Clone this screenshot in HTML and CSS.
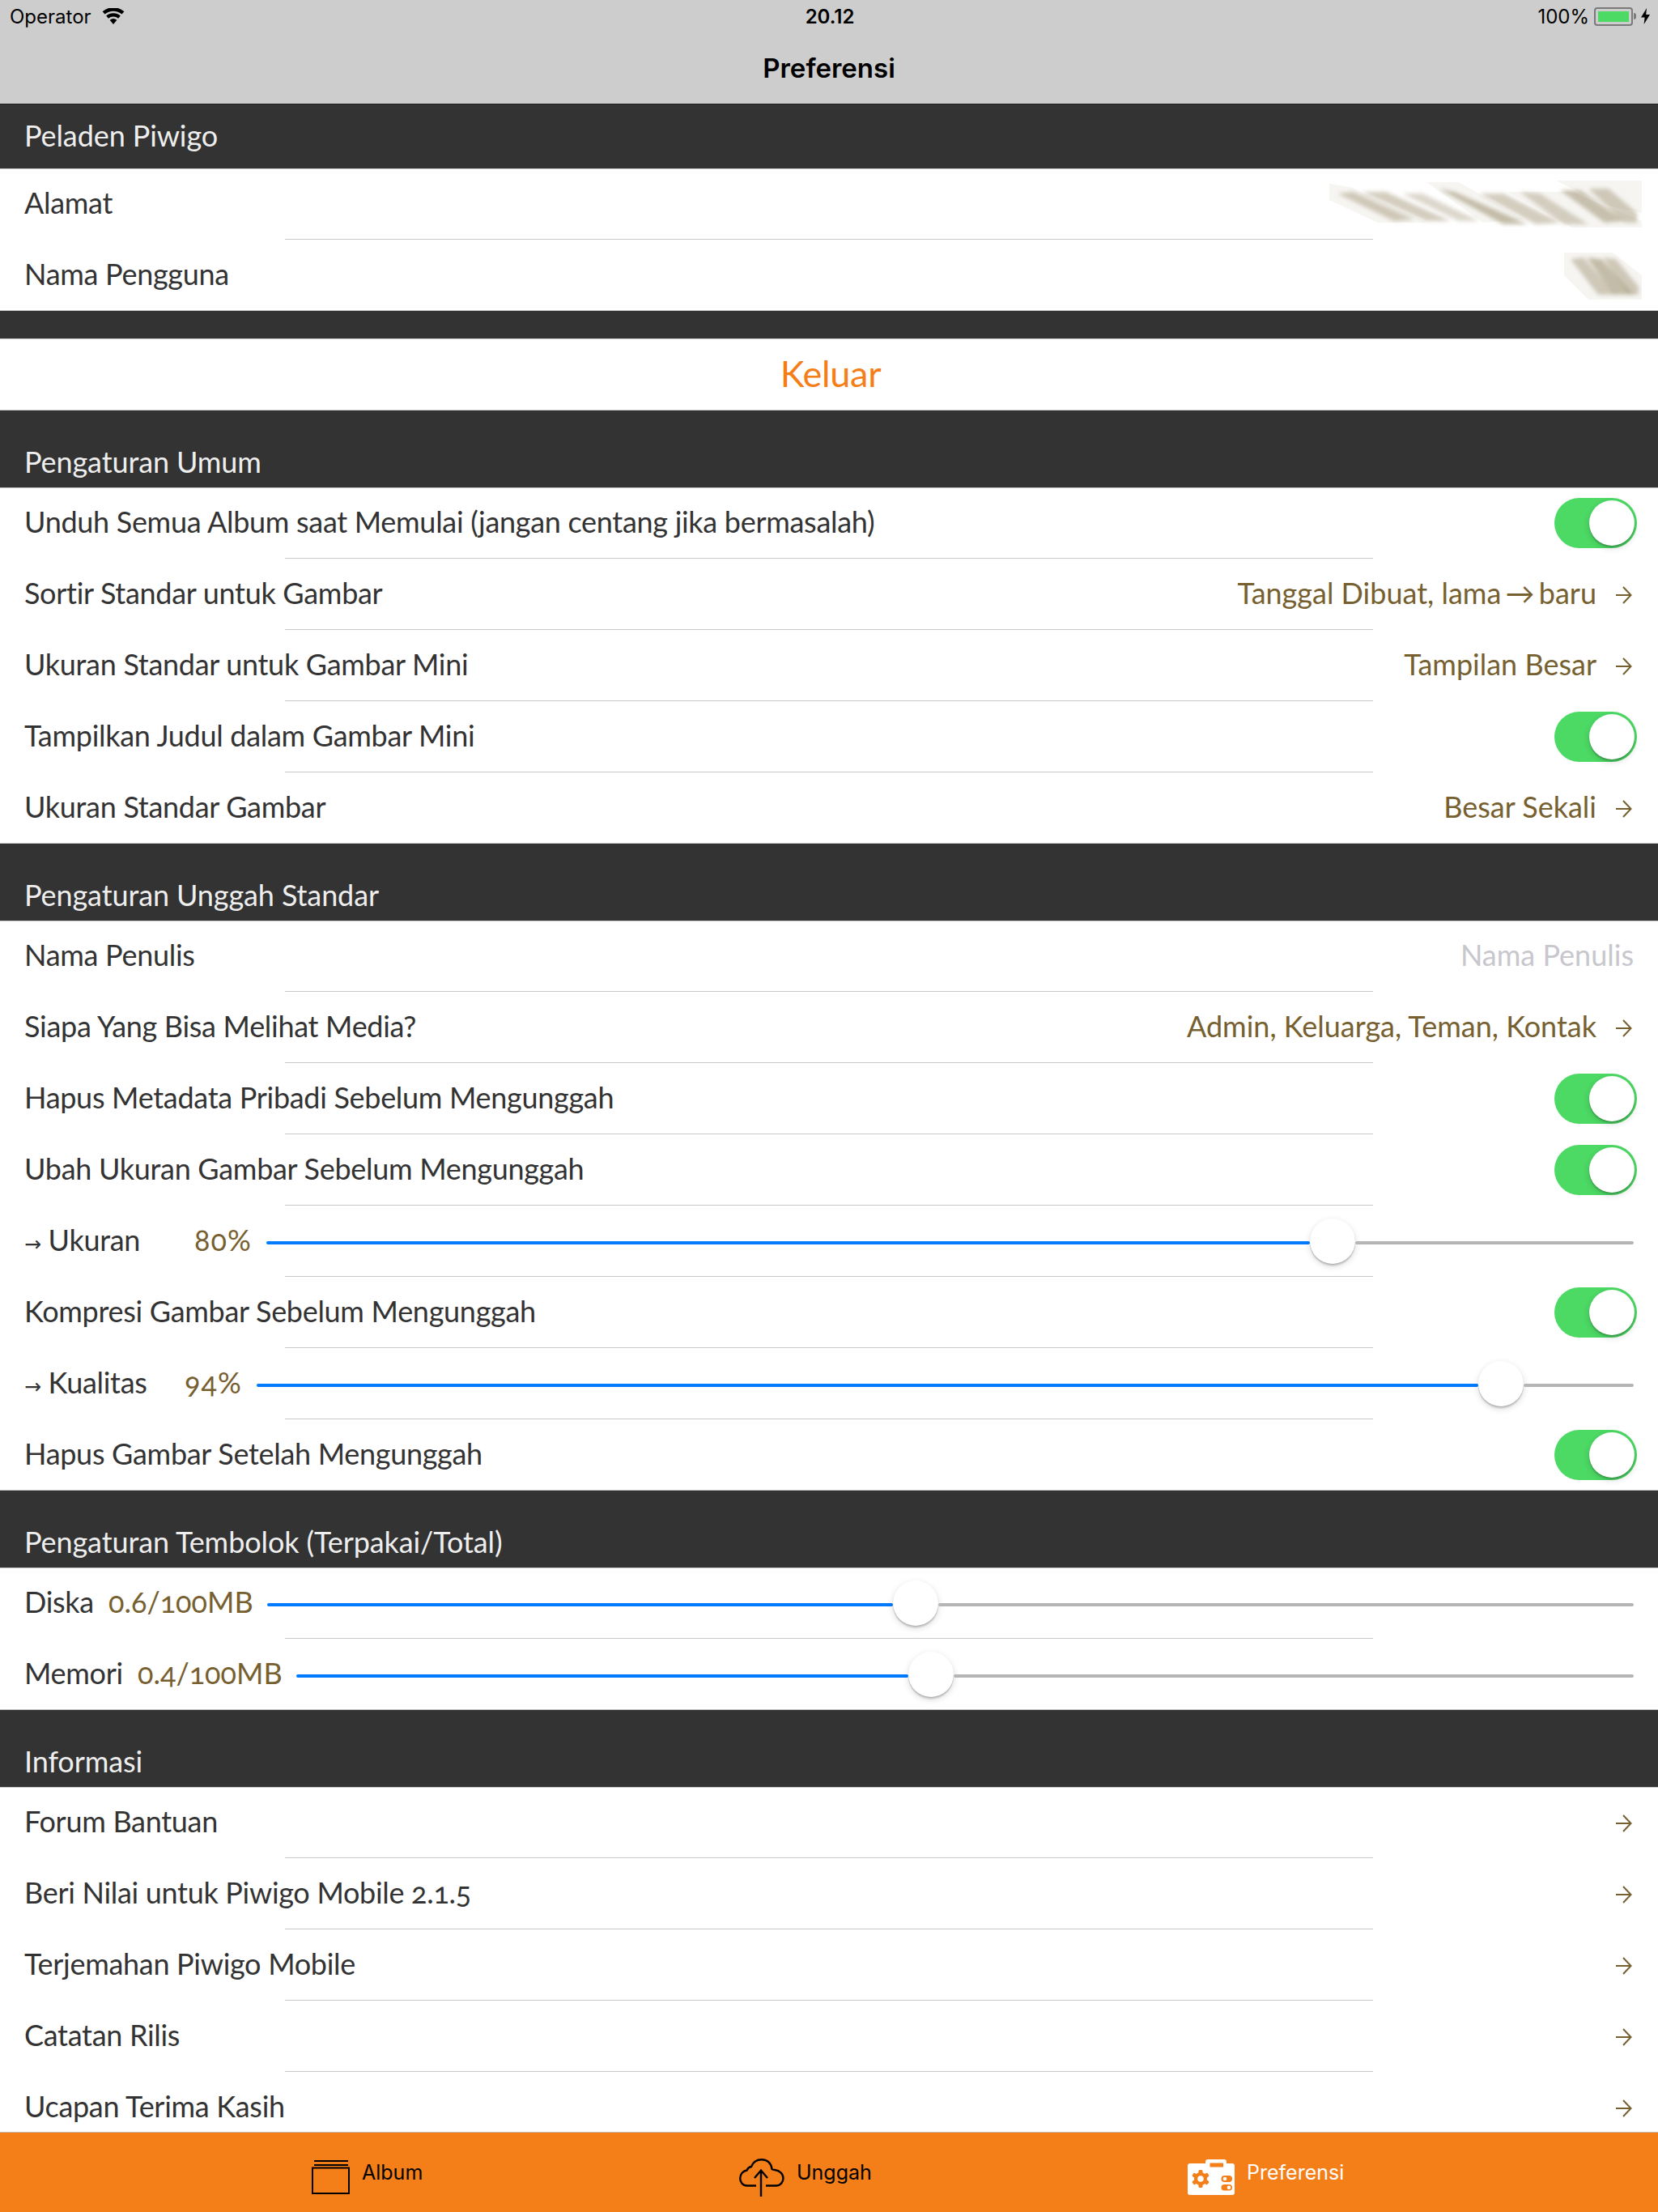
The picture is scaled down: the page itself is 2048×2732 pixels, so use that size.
FILE: index.html
```html
<!DOCTYPE html>
<html lang="id">
<head>
  <meta charset="UTF-8">
  <meta name="viewport" content="width=device-width, initial-scale=1.0">
  <title>Preferensi</title>
  <link rel="stylesheet" href="styles.css">
</head>
<body>
  <svg class="defs" width="0" height="0">
    <defs>
      <symbol id="go" viewBox="0 0 20 22">
        <path d="M0 11H18.5M9 1L18.5 11L9 21" fill="none" stroke="#776030" stroke-width="2"/>
      </symbol>
      <filter id="smear"><feGaussianBlur stdDeviation="2.4"/></filter>
    </defs>
  </svg>

  <div class="app">
    <header class="top">
      <div class="status">
        <div class="status-left">
          <span>Operator</span>
          <svg class="wifi" width="28" height="20" viewBox="0 0 28 20">
            <path d="M14 20L9.6 14.8A7 7 0 0 1 18.4 14.8Z"/>
            <path d="M7.9 12.8L5.2 9.6A13.5 13.5 0 0 1 22.8 9.6L20.1 12.8A9.4 9.4 0 0 0 7.9 12.8Z"/>
            <path d="M3.5 7.6L0.6 4.2A20.5 20.5 0 0 1 27.4 4.2L24.5 7.6A16 16 0 0 0 3.5 7.6Z"/>
          </svg>
        </div>
        <span class="clock">20.12</span>
        <div class="status-right">
          <span>100%</span>
          <span class="battery"><span class="battery-fill"></span></span>
          <span class="battery-tip"></span>
          <svg class="bolt" width="11" height="20" viewBox="0 0 11 20">
            <path d="M7 0L0 11.5H4.6L3.6 20L11 8H6.2Z"/>
          </svg>
        </div>
      </div>
      <h1 class="title">Preferensi</h1>
    </header>

    <main class="content">
      <h2 class="head head-first">Peladen Piwigo</h2>
      <div class="row row-first">
        <span class="label">Alamat</span>
        <svg class="blur" width="386" height="58" viewBox="0 0 386 58">
          <g fill="#b5aa90">
            <path opacity=".12" d="M0 4L26 8L120 52H60L0 24ZM120 2L160 2L240 48L190 52ZM220 14L300 14L386 50V58H300ZM280 0H386V40L340 30Z"/>
          </g>
          <g filter="url(#smear)" fill="#a89c80">
            <path opacity=".5" d="M10 16L30 14L105 48L80 50Z"/>
            <path opacity=".5" d="M40 14L70 14L150 50L120 50Z"/>
            <path opacity=".4" d="M90 16L115 16L185 50L160 50Z"/>
            <path opacity=".65" d="M135 10L155 14L245 54L215 54Z"/>
            <path opacity=".5" d="M185 16L215 16L285 52L255 54Z"/>
            <path opacity=".45" d="M235 14L260 16L320 54L290 54Z"/>
            <path opacity=".6" d="M285 12L310 12L365 50L340 52Z"/>
            <path opacity=".5" d="M320 10L345 10L380 40V52L365 52Z"/>
          </g>
        </svg>
      </div>
      <hr class="sep">
      <div class="row row-end">
        <span class="label">Nama Pengguna</span>
        <svg class="blur" width="96" height="60" viewBox="0 0 96 60">
          <path fill="#b5aa90" opacity=".12" d="M0 2H60L96 30V60H30L0 30Z"/>
          <g filter="url(#smear)" fill="#a89c80">
            <path opacity=".5" d="M8 10L24 8L64 54L42 54Z"/>
            <path opacity=".65" d="M28 8L46 10L86 54L62 54Z"/>
            <path opacity=".5" d="M48 8L64 10L92 44V54L80 54Z"/>
          </g>
        </svg>
      </div>
      <div class="band"></div>
      <div class="row row-action">Keluar</div>

      <h2 class="head">Pengaturan Umum</h2>
      <div class="row row-first">
        <span class="label">Unduh Semua Album saat Memulai (jangan centang jika bermasalah)</span>
        <span class="switch"><span class="knob"></span></span>
      </div>
      <hr class="sep">
      <div class="row">
        <span class="label">Sortir Standar untuk Gambar</span>
        <span class="value">Tanggal Dibuat, lama <span class="tight">→</span> baru</span>
        <svg class="go"><use href="#go"/></svg>
      </div>
      <hr class="sep">
      <div class="row">
        <span class="label">Ukuran Standar untuk Gambar Mini</span>
        <span class="value">Tampilan Besar</span>
        <svg class="go"><use href="#go"/></svg>
      </div>
      <hr class="sep">
      <div class="row">
        <span class="label">Tampilkan Judul dalam Gambar Mini</span>
        <span class="switch"><span class="knob"></span></span>
      </div>
      <hr class="sep">
      <div class="row row-end">
        <span class="label">Ukuran Standar Gambar</span>
        <span class="value">Besar Sekali</span>
        <svg class="go"><use href="#go"/></svg>
      </div>

      <h2 class="head">Pengaturan Unggah Standar</h2>
      <div class="row row-first">
        <span class="label">Nama Penulis</span>
        <span class="placeholder">Nama Penulis</span>
      </div>
      <hr class="sep">
      <div class="row">
        <span class="label">Siapa Yang Bisa Melihat Media?</span>
        <span class="value">Admin, Keluarga, Teman, Kontak</span>
        <svg class="go"><use href="#go"/></svg>
      </div>
      <hr class="sep">
      <div class="row">
        <span class="label">Hapus Metadata Pribadi Sebelum Mengunggah</span>
        <span class="switch"><span class="knob"></span></span>
      </div>
      <hr class="sep">
      <div class="row">
        <span class="label">Ubah Ukuran Gambar Sebelum Mengunggah</span>
        <span class="switch"><span class="knob"></span></span>
      </div>
      <hr class="sep">
      <div class="row row-slider">
        <span class="label label-ukuran"><span class="arrow">→</span> Ukuran</span>
        <span class="amount amount-pct">80%</span>
        <div class="slider">
          <span class="fill" style="width:1289px"></span>
          <span class="knob"></span>
          <span class="rest"></span>
        </div>
      </div>
      <hr class="sep">
      <div class="row">
        <span class="label">Kompresi Gambar Sebelum Mengunggah</span>
        <span class="switch"><span class="knob"></span></span>
      </div>
      <hr class="sep">
      <div class="row row-slider">
        <span class="label label-kualitas"><span class="arrow">→</span> Kualitas</span>
        <span class="amount amount-pct">94%</span>
        <div class="slider">
          <span class="fill" style="width:1509px"></span>
          <span class="knob"></span>
          <span class="rest"></span>
        </div>
      </div>
      <hr class="sep">
      <div class="row row-end">
        <span class="label">Hapus Gambar Setelah Mengunggah</span>
        <span class="switch"><span class="knob"></span></span>
      </div>

      <h2 class="head">Pengaturan Tembolok (Terpakai/Total)</h2>
      <div class="row row-first row-slider">
        <span class="label label-diska">Diska</span>
        <span class="amount amount-mb">0.6/100MB</span>
        <div class="slider">
          <span class="fill" style="width:773px"></span>
          <span class="knob"></span>
          <span class="rest"></span>
        </div>
      </div>
      <hr class="sep">
      <div class="row row-end row-slider">
        <span class="label label-memori">Memori</span>
        <span class="amount amount-mb">0.4/100MB</span>
        <div class="slider">
          <span class="fill" style="width:756px"></span>
          <span class="knob"></span>
          <span class="rest"></span>
        </div>
      </div>

      <h2 class="head">Informasi</h2>
      <div class="row row-first">
        <span class="label">Forum Bantuan</span>
        <svg class="go"><use href="#go"/></svg>
      </div>
      <hr class="sep">
      <div class="row">
        <span class="label">Beri Nilai untuk Piwigo Mobile 2.1.5</span>
        <svg class="go"><use href="#go"/></svg>
      </div>
      <hr class="sep">
      <div class="row">
        <span class="label">Terjemahan Piwigo Mobile</span>
        <svg class="go"><use href="#go"/></svg>
      </div>
      <hr class="sep">
      <div class="row">
        <span class="label">Catatan Rilis</span>
        <svg class="go"><use href="#go"/></svg>
      </div>
      <hr class="sep">
      <div class="row">
        <span class="label">Ucapan Terima Kasih</span>
        <svg class="go"><use href="#go"/></svg>
      </div>
    </main>

    <nav class="tabs">
      <div class="tab tab-album">
        <svg width="47" height="42" viewBox="0 0 47 42" fill="none" stroke="#000" stroke-width="2">
          <path d="M3 1H45M3 6H45"/>
          <rect x="1" y="9.5" width="45" height="31.5"/>
        </svg>
        <span>Album</span>
      </div>
      <div class="tab tab-upload">
        <svg width="56" height="47" viewBox="0 0 56 47" fill="none" stroke="#000" stroke-width="2.4">
          <path d="M21 33.5H10C4.5 33.5 1.2 29 1.2 24.5C1.2 19 5 15.5 9.5 14.5C10.5 12 12 10.5 15 10C17 4.5 22 1.2 28 1.2C35 1.2 39.5 6 40.5 13C41 14 42 13.8 44 14C50 14.5 54.5 19 54.5 24.5C54.5 29.5 50.5 33.5 46 33.5H33"/>
          <path d="M27 47V15M19 24L27 14.5L35 24"/>
        </svg>
        <span>Unggah</span>
      </div>
      <div class="tab tab-prefs">
        <svg width="58" height="44" viewBox="0 0 58 44">
          <path fill="#fff" d="M3 5H22V3Q22 0 25 0H45Q48 0 48 3V5H55Q58 5 58 8V41Q58 44 55 44H3Q0 44 0 41V8Q0 5 3 5Z"/>
          <g fill="#f47e18">
            <rect x="27.5" y="4.5" width="16.5" height="5"/>
            <circle cx="16" cy="24" r="8"/>
            <rect x="13.5" y="13" width="5" height="22" rx="1.5"/>
            <rect x="13.5" y="13" width="5" height="22" rx="1.5" transform="rotate(60 16 24)"/>
            <rect x="13.5" y="13" width="5" height="22" rx="1.5" transform="rotate(-60 16 24)"/>
            <rect x="41.5" y="20" width="13.5" height="8" rx="4"/>
            <rect x="41.5" y="31" width="13.5" height="7.5" rx="3.75"/>
          </g>
          <g fill="#fff">
            <circle cx="16" cy="24" r="3.8"/>
            <circle cx="46" cy="24" r="2.3"/>
            <circle cx="51" cy="34.7" r="2.3"/>
          </g>
        </svg>
        <span>Preferensi</span>
      </div>
    </nav>
  </div>
</body>
</html>
```

FILE: styles.css
```css
* {
  box-sizing: border-box;
}
body {
  margin: 0;
  font-family: Lato, "Open Sans", sans-serif;
  font-size: 36px;
  letter-spacing: -.3px;
  color: #333;
  background: #fff;
}
.defs {
  display: block;
  height: 0;
}
.app {
  display: flex;
  flex-direction: column;
  height: 2732px;
  overflow: hidden;
}

/* status bar and title */
.top {
  flex: none;
  height: 129px;
  background: #cdcdcd;
  border-bottom: 1px solid #222;
  font-family: Inter, "Liberation Sans", sans-serif;
  letter-spacing: 0;
  color: #000;
}
.status {
  display: flex;
  justify-content: space-between;
  align-items: center;
  height: 40px;
  padding: 0 10px 0 12px;
  font-size: 24px;
}
.status-left, .status-right {
  display: flex;
  align-items: center;
  width: 400px;
}
.status-right {
  justify-content: flex-end;
}
.wifi {
  margin-left: 13px;
}
.clock {
  font-weight: 600;
}
.battery {
  display: block;
  width: 48px;
  height: 23px;
  margin-left: 6px;
  padding: 3px;
  border: 2px solid #7a7a7a;
  border-radius: 4px;
}
.battery-fill {
  display: block;
  height: 100%;
  background: #4cd964;
}
.battery-tip {
  width: 3px;
  height: 8px;
  margin-left: 1px;
  background: #7a7a7a;
  border-radius: 0 3px 3px 0;
}
.bolt {
  margin-left: 6px;
}
.title {
  margin: 0;
  height: 88px;
  line-height: 88px;
  text-align: center;
  font-size: 33px;
  font-weight: 600;
}

/* list */
.content {
  flex: 1;
  overflow: hidden;
}
.head {
  display: flex;
  align-items: flex-end;
  height: 96px;
  margin: 0;
  padding: 0 30px 10px;
  background: #333;
  border-bottom: 1px solid #c8c7cc;
  color: #eee;
  font-size: 36px;
  font-weight: 400;
  letter-spacing: -.1px;
}
.head-first {
  height: 80px;
  align-items: center;
  padding-bottom: 4px;
}
.row {
  display: flex;
  align-items: center;
  height: 87px;
  padding: 0 26px 0 30px;
  background: #fff;
  font-variant-numeric: oldstyle-nums;
}
.row-first {
  height: 86px;
}
.row-end {
  height: 88px;
  border-bottom: 1px solid #c8c7cc;
}
.row-slider {
  padding-right: 30px;
}
.row-action {
  justify-content: center;
  height: 88px;
  padding-bottom: 4px;
  border-bottom: 1px solid #c8c7cc;
  color: #f47e18;
  font-size: 45px;
}
.sep {
  height: 1px;
  margin: 0 352px;
  border: 0;
  background: #c8c7cc;
}
.band {
  height: 35px;
  background: #333;
  border-bottom: 1px solid #c8c7cc;
}
.label, .value, .placeholder, .amount {
  margin-bottom: 4px;
  white-space: nowrap;
}
.arrow {
  font-family: "DejaVu Sans", sans-serif;
  font-size: 25px;
}
.tight {
  margin: 0 -4px;
}
.value, .placeholder {
  margin-left: auto;
  letter-spacing: 0;
}
.value {
  color: #776030;
}
.placeholder {
  color: #c7c7cd;
  padding-right: 4px;
}
.go {
  flex: none;
  width: 20px;
  height: 22px;
  margin: 2px 6px 0 auto;
}
.value + .go {
  margin-left: 24px;
}
.blur {
  flex: none;
  margin-left: auto;
  margin-right: -6px;
}

/* switches */
.switch {
  display: flex;
  justify-content: flex-end;
  align-items: center;
  flex: none;
  width: 102px;
  height: 62px;
  margin-left: auto;
  padding: 0 3px;
  background: #4cd964;
  border-radius: 31px;
}
.knob {
  display: block;
  flex: none;
  width: 56px;
  height: 56px;
  background: #fff;
  border-radius: 50%;
  box-shadow: 0 3px 8px rgba(0, 0, 0, .15), 0 1px 1px rgba(0, 0, 0, .16), 0 3px 1px rgba(0, 0, 0, .1);
}

/* sliders */
.slider {
  display: flex;
  align-items: center;
  flex: 1;
}
.fill, .rest {
  height: 4px;
  margin-top: 4px;
  border-radius: 2px;
}
.fill {
  flex: none;
  background: #007aff;
}
.rest {
  flex: 1;
  background: #b5b5b5;
}
.amount {
  flex: none;
  color: #776030;
}
.amount-pct {
  width: 89px;
  letter-spacing: 1px;
}
.amount-mb {
  width: 196px;
  letter-spacing: 0;
}
.label-ukuran {
  width: 210px;
}
.label-kualitas {
  width: 198px;
}
.label-diska {
  width: 104px;
}
.label-memori {
  width: 140px;
}

/* tab bar */
.tabs {
  display: flex;
  flex: none;
  height: 99px;
  background: #f47e18;
  border-top: 1px solid #c8b8a8;
  font-family: Inter, "Liberation Sans", sans-serif;
  font-size: 25px;
  letter-spacing: 0;
  color: #000;
}
.tab {
  display: flex;
  align-items: center;
  gap: 15px;
  height: 100%;
  padding-top: 12px;
}
.tab span {
  margin-bottom: 12px;
}
.tab-album {
  padding-left: 385px;
  width: 913px;
}
.tab-upload {
  width: 554px;
}
.tab-prefs {
  color: #fff;
}
```
